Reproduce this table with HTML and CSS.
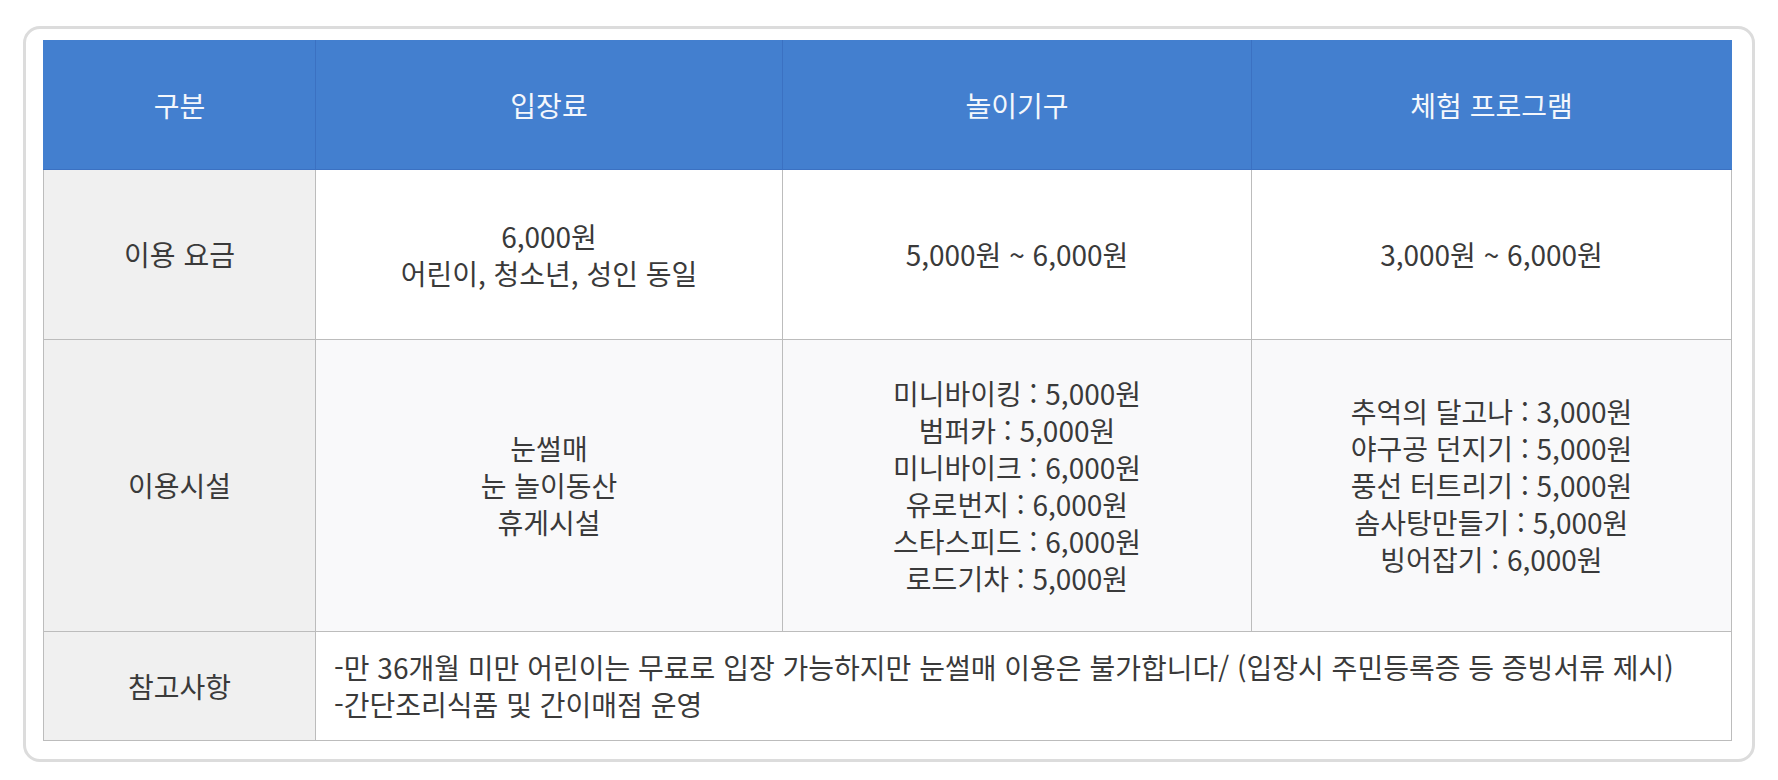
FILE: index.html
```html
<!DOCTYPE html>
<html lang="ko">
<head>
<meta charset="utf-8">
<title>이용 요금</title>
<link rel="stylesheet" href="styles.css">
</head>
<body>
<div class="card">
  <table class="fee-table">
    <colgroup>
      <col class="c1"><col class="c2"><col class="c3"><col class="c4">
    </colgroup>
    <thead>
      <tr class="row-head">
        <th>구분</th>
        <th>입장료</th>
        <th>놀이기구</th>
        <th>체험 프로그램</th>
      </tr>
    </thead>
    <tbody>
      <tr class="row-fee">
        <th class="label">이용 요금</th>
        <td>6,000원<br>어린이, 청소년, 성인 동일</td>
        <td>5,000원 ~ 6,000원</td>
        <td>3,000원 ~ 6,000원</td>
      </tr>
      <tr class="row-fac alt">
        <th class="label">이용시설</th>
        <td>눈썰매<br>눈 놀이동산<br>휴게시설</td>
        <td>미니바이킹 : 5,000원<br>범퍼카 : 5,000원<br>미니바이크 : 6,000원<br>유로번지 : 6,000원<br>스타스피드 : 6,000원<br>로드기차 : 5,000원</td>
        <td>추억의 달고나 : 3,000원<br>야구공 던지기 : 5,000원<br>풍선 터트리기 : 5,000원<br>솜사탕만들기 : 5,000원<br>빙어잡기 : 6,000원</td>
      </tr>
      <tr class="row-note">
        <th class="label">참고사항</th>
        <td colspan="3" class="note">-만 36개월 미만 어린이는 무료로 입장 가능하지만 눈썰매 이용은 불가합니다/ (입장시 주민등록증 등 증빙서류 제시)<br>-간단조리식품 및 간이매점 운영</td>
      </tr>
    </tbody>
  </table>
</div>
</body>
</html>
```

FILE: styles.css
```css
html, body {
  margin: 0;
  padding: 0;
  background: #ffffff;
}

body {
  font-family: "Noto Sans CJK KR", "Liberation Sans", sans-serif;
  font-size: 28px;
  color: #3a3a3a;
}

.card {
  margin: 26px 23px 0;
  padding: 11px 21px 18px 17px;
  border: 3px solid #dcdcdc;
  border-radius: 17px;
  box-sizing: border-box;
  height: 736px;
}

.fee-table {
  width: 1688px;
  table-layout: fixed;
  border-collapse: collapse;
}

.c1 { width: 272px; }
.c2 { width: 467px; }
.c3 { width: 469px; }
.c4 { width: 480px; }

.fee-table th,
.fee-table td {
  border: 1px solid #bcbcbc;
  padding: 0;
  text-align: center;
  vertical-align: middle;
  line-height: 37px;
  font-weight: 400;
}

.row-head th {
  background: #437fcf;
  color: #f4f7fc;
  border-color: #3b71c2;
  border-top-color: #437fcf;
  height: 128px;
}

.row-head th:first-child { border-left-color: #437fcf; }
.row-head th:last-child { border-right-color: #437fcf; }

.fee-table .label {
  background: #f0f0f0;
}

.row-fee td { background: #ffffff; }
.row-fee th, .row-fee td { height: 169px; }

.alt td { background: #f9f9fa; }
.row-fac th, .row-fac td { height: 291px; }

.row-note th, .row-note td { height: 108px; }

.fee-table td.note {
  text-align: left;
  padding-left: 18px;
  background: #ffffff;
}
```
